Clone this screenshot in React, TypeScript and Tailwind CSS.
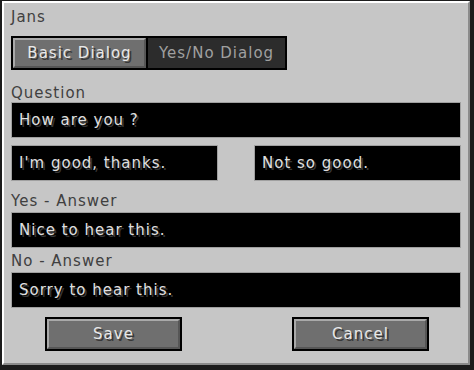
const font = "font-['DejaVu_Sans',sans-serif]";

function Label({ text, className = "" }: { text: string; className?: string }) {
  return (
    <div className={`h-[22px] text-[15px] leading-[22px] tracking-[1px] text-[#404040] ${className}`}>
      {text}
    </div>
  );
}

function Field({ value, className = "" }: { value: string; className?: string }) {
  return (
    <div
      className={`h-[36px] border border-[#a0a0a0] bg-black pl-[7px] flex items-center text-[15px] tracking-[1px] text-[#e0e0e0] [text-shadow:2px_2px_0_#383838] ${className}`}
    >
      {value}
    </div>
  );
}

function Button({ text, className = "" }: { text: string; className?: string }) {
  return (
    <div className={`h-[34px] w-[137px] border-2 border-black ${className}`}>
      <div className="h-full border-t-2 border-l-2 border-[#a9a9a9] border-b-2 border-r-2 border-b-[#565656] border-r-[#565656] bg-[#6f6f6f] flex items-center justify-center text-[15px] tracking-[1px] text-[#e8e8e8] [text-shadow:2px_2px_0_#383838]">
        {text}
      </div>
    </div>
  );
}

export default function App() {
  return (
    <div className={`w-[474px] h-[370px] bg-[#1c1c1c] pt-px pl-[2px] pr-[4px] pb-[5px] ${font}`}>
      <div className="h-full border-t-2 border-l-2 border-white border-b-2 border-r-2 border-b-[#8b8b8b] border-r-[#8b8b8b] bg-[#c6c6c6] pl-[7px] pr-[7px] pt-[3px]">
        <Label text="Jans" />
        <div className="mt-[8px] flex h-[34px]">
          <div className="w-[137px] border-2 border-black">
            <div className="h-full border-t-2 border-l-2 border-[#a9a9a9] border-b-2 border-r-2 border-b-[#565656] border-r-[#565656] bg-[#6f6f6f] flex items-center justify-center text-[15px] tracking-[1px] text-[#e8e8e8] [text-shadow:2px_2px_0_#383838]">
              Basic Dialog
            </div>
          </div>
          <div className="w-[139px] border-2 border-l-0 border-black bg-[#2c2c2c] flex items-center justify-center text-[15px] tracking-[1px] text-[#a0a0a0]">
            Yes/No Dialog
          </div>
        </div>
        <Label text="Question" className="mt-[12px]" />
        <Field value="How are you ?" className="mt-[-2px]" />
        <div className="mt-[7px] flex justify-between">
          <Field value="I'm good, thanks." className="w-[207px]" />
          <Field value="Not so good." className="w-[207px]" />
        </div>
        <Label text="Yes - Answer" className="mt-[9px]" />
        <Field value="Nice to hear this." />
        <Label text="No - Answer" className="mt-[2px]" />
        <Field value="Sorry to hear this." />
        <div className="mt-[9px] flex justify-between pl-[34px] pr-[32px]">
          <Button text="Save" />
          <Button text="Cancel" />
        </div>
      </div>
    </div>
  );
}
